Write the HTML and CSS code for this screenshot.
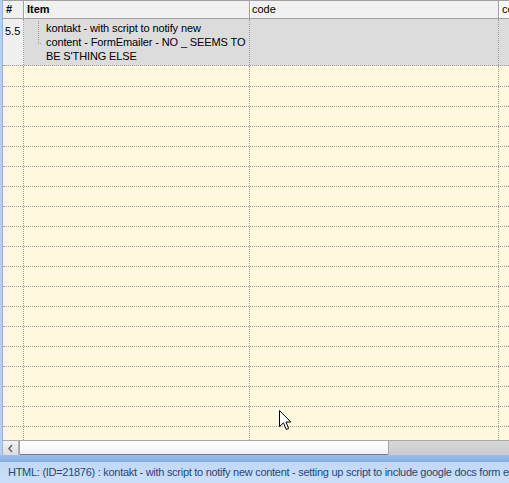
FILE: index.html
```html
<!DOCTYPE html>
<html>
<head>
<meta charset="utf-8">
<link rel="stylesheet" href="styles.css">
</head>
<body>
<div class="app">
  <div class="main">
    <div class="strip"></div>
    <div class="content">
      <div class="grid">
        <div class="row head">
          <div class="cell num b">#</div>
          <div class="cell item b">Item</div>
          <div class="cell code">code</div>
          <div class="cell last">co</div>
        </div>
        <div class="row sel">
          <div class="cell num"><span class="rownum">5.5</span></div>
          <div class="cell item">
            <span class="tree"></span>
            <span class="text">kontakt - with script to notify new<br>content - FormEmailer - NO _ SEEMS TO<br>BE S'THING ELSE</span>
          </div>
          <div class="cell code"></div>
          <div class="cell last"></div>
        </div>
        <div class="row first"><div class="cell num"></div><div class="cell item"></div><div class="cell code"></div><div class="cell last"></div></div>
        <div class="row"><div class="cell num"></div><div class="cell item"></div><div class="cell code"></div><div class="cell last"></div></div>
        <div class="row"><div class="cell num"></div><div class="cell item"></div><div class="cell code"></div><div class="cell last"></div></div>
        <div class="row"><div class="cell num"></div><div class="cell item"></div><div class="cell code"></div><div class="cell last"></div></div>
        <div class="row"><div class="cell num"></div><div class="cell item"></div><div class="cell code"></div><div class="cell last"></div></div>
        <div class="row"><div class="cell num"></div><div class="cell item"></div><div class="cell code"></div><div class="cell last"></div></div>
        <div class="row"><div class="cell num"></div><div class="cell item"></div><div class="cell code"></div><div class="cell last"></div></div>
        <div class="row"><div class="cell num"></div><div class="cell item"></div><div class="cell code"></div><div class="cell last"></div></div>
        <div class="row"><div class="cell num"></div><div class="cell item"></div><div class="cell code"></div><div class="cell last"></div></div>
        <div class="row"><div class="cell num"></div><div class="cell item"></div><div class="cell code"></div><div class="cell last"></div></div>
        <div class="row"><div class="cell num"></div><div class="cell item"></div><div class="cell code"></div><div class="cell last"></div></div>
        <div class="row"><div class="cell num"></div><div class="cell item"></div><div class="cell code"></div><div class="cell last"></div></div>
        <div class="row"><div class="cell num"></div><div class="cell item"></div><div class="cell code"></div><div class="cell last"></div></div>
        <div class="row"><div class="cell num"></div><div class="cell item"></div><div class="cell code"></div><div class="cell last"></div></div>
        <div class="row"><div class="cell num"></div><div class="cell item"></div><div class="cell code"></div><div class="cell last"></div></div>
        <div class="row"><div class="cell num"></div><div class="cell item"></div><div class="cell code"></div><div class="cell last"></div></div>
        <div class="row"><div class="cell num"></div><div class="cell item"></div><div class="cell code"></div><div class="cell last"></div></div>
        <div class="row"><div class="cell num"></div><div class="cell item"></div><div class="cell code"></div><div class="cell last"></div></div>
        <div class="row"><div class="cell num"></div><div class="cell item"></div><div class="cell code"></div><div class="cell last"></div></div>
      </div>
      <div class="hscroll">
        <div class="sb-btn">
          <svg width="7" height="9" viewBox="0 0 7 9"><path d="M5 1 L2 4.5 L5 8" fill="none" stroke="#6a6a6a" stroke-width="1.6"/></svg>
        </div>
        <div class="sb-thumb"></div>
        <div class="sb-track"></div>
      </div>
    </div>
  </div>
  <div class="band"></div>
  <div class="status">HTML: (ID=21876) : kontakt - with script to notify new content - setting up script to include google docs form embedded</div>
  <svg class="cursor" width="13" height="21" viewBox="0 0 13 21">
    <path d="M0.5 0.5 L0.5 16.5 L4.5 12.8 L7.2 19.5 L9.6 18.5 L7 12 L11.8 12 Z" fill="#fff" stroke="#000" stroke-width="1" stroke-linejoin="miter"/>
  </svg>
</div>
</body>
</html>
```

FILE: styles.css
```css
html, body {
  margin: 0;
  padding: 0;
}
body {
  width: 509px;
  height: 483px;
  overflow: hidden;
  font-family: "Liberation Sans", Arial, sans-serif;
  font-size: 11px;
  color: #000;
}
.app {
  position: relative;
  width: 509px;
  height: 483px;
  display: flex;
  flex-direction: column;
  overflow: hidden;
}
.main {
  display: flex;
  height: 455px;
}
.strip {
  width: 3px;
  flex: none;
  background: linear-gradient(to right, #b6cff2 0, #b6cff2 2px, #94b4e4 2px);
}
.content {
  flex: 1;
  display: flex;
  flex-direction: column;
  min-width: 0;
}
.grid {
  height: 440px;
  overflow: hidden;
  background: #fff8de;
}
.row {
  display: grid;
  grid-template-columns: 21px 226px 249px 1fr;
  height: 20px;
  box-sizing: border-box;
  border-bottom: 1px dotted #9c9c9c;
}
.row.first {
  height: 21px;
}
.cell {
  box-sizing: border-box;
  border-right: 1px dotted #9c9c9c;
  overflow: hidden;
  white-space: nowrap;
}
.cell.last {
  border-right: none;
}
.row.head {
  height: 19px;
  background: #f0f0f0;
  border-top: 1px solid #a0a0a0;
  border-bottom: 1px solid #a0a0a0;
}
.row.head .cell {
  border-right: 1px solid #a0a0a0;
  line-height: 17px;
  padding-left: 3px;
  box-shadow: inset 1px 0 #ffffff;
}
.row.head .cell.num {
  box-shadow: none;
}
.row.head .cell.code {
  padding-left: 2px;
}
.row.head .cell.last {
  border-right: none;
  background: #f7f7f7;
  padding-left: 3px;
}
.b {
  font-weight: bold;
}
.row.sel {
  height: 47px;
  background: #dcdcdc;
}
.row.sel .cell.num {
  background: #efefef;
}
.rownum {
  display: block;
  padding-left: 2px;
  padding-top: 5px;
  line-height: 14px;
}
.row.sel .cell.item {
  display: flex;
  align-items: flex-start;
}
.tree {
  flex: none;
  width: 2px;
  height: 22px;
  margin-left: 14px;
  margin-top: 2px;
  border-left: 1px dotted #9c9c9c;
  border-bottom: 1px dotted #9c9c9c;
}
.text {
  margin-left: 5px;
  padding-top: 2px;
  line-height: 14px;
  letter-spacing: -0.12px;
  white-space: nowrap;
}
.hscroll {
  height: 15px;
  display: flex;
  box-sizing: border-box;
  border-top: 1px solid #a8a8a8;
  background: linear-gradient(#e2e2e2, #cfcfcf);
}
.sb-btn {
  width: 16px;
  flex: none;
  box-sizing: border-box;
  display: flex;
  align-items: center;
  justify-content: center;
  background: linear-gradient(#f2f2f2, #dedede);
  border-right: 1px solid #b0b0b0;
}
.sb-thumb {
  width: 370px;
  flex: none;
  box-sizing: border-box;
  background: linear-gradient(#ffffff, #f2f2f2);
  border: 1px solid #a4a4a4;
  border-bottom-color: #7c7c7c;
  border-top: none;
  border-radius: 0 0 2px 2px;
}
.sb-track {
  flex: 1;
  background: linear-gradient(#d8d8d8, #cacaca);
}
.band {
  height: 7px;
  background: linear-gradient(#9cbde9, #86ace2);
}
.status {
  flex: 1;
  background: linear-gradient(#c0d8f7, #cadff9);
  color: #2a4677;
  line-height: 21px;
  padding-left: 8px;
  letter-spacing: -0.28px;
  white-space: nowrap;
  overflow: hidden;
}
.cursor {
  position: absolute;
  left: 279px;
  top: 410px;
}
```
